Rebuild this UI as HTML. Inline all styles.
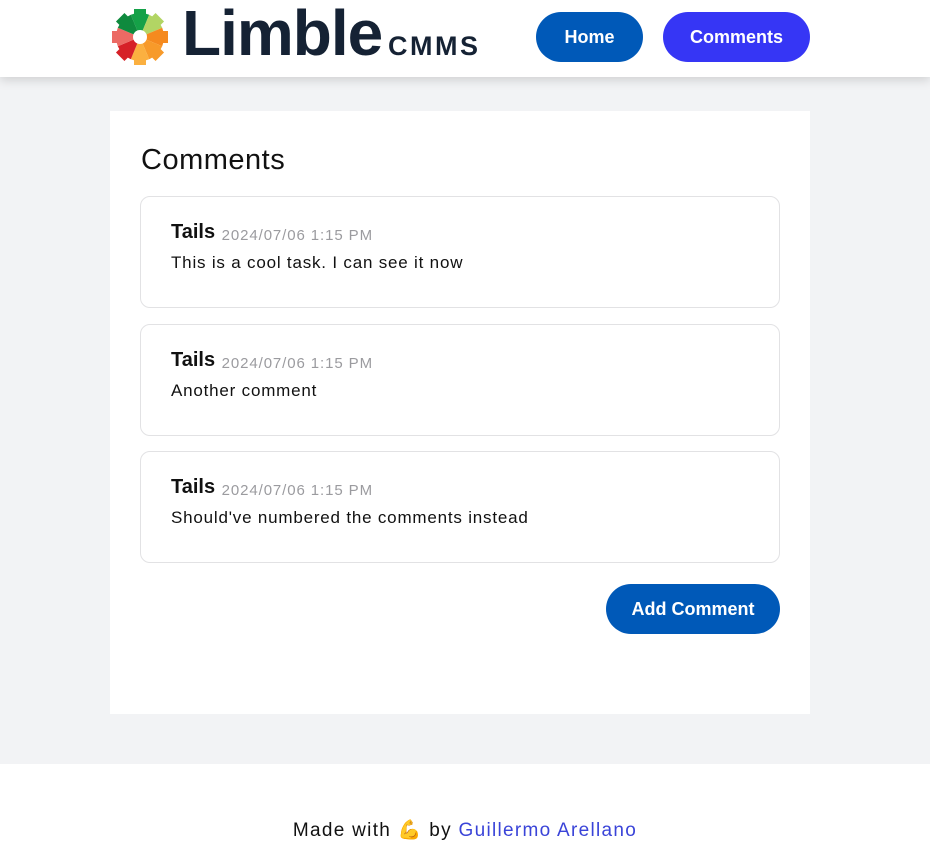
<!DOCTYPE html>
<html><head><meta charset="utf-8"><style>
*{box-sizing:border-box;margin:0;padding:0}
body{width:930px;height:863px;background:#f2f3f5;font-family:"Liberation Sans",Roboto,sans-serif;position:relative;overflow:hidden}
header{position:absolute;left:0;top:0;width:930px;height:77px;background:#fff;box-shadow:0 3px 10px rgba(0,0,0,.15)}
.logo{position:absolute;left:108px;top:5px}
.lt{position:absolute;left:182px;top:-4px;font-size:64px;font-weight:bold;color:#152234;letter-spacing:-1px}
.cm{position:absolute;left:388px;top:31px;font-size:27px;font-weight:bold;color:#152234;letter-spacing:2.5px}
.btn{position:absolute;color:#fff;font-weight:bold;font-size:18px;border-radius:25px;text-align:center;line-height:50px;height:50px}
.card{position:absolute;left:110px;top:111px;width:700px;height:603px;background:#fff}
h1{position:absolute;left:31px;top:33px;font-size:29px;font-weight:normal;color:#111;letter-spacing:0.5px}
.c{position:absolute;left:30px;width:640px;height:112px;border:1px solid #e2e2e4;border-radius:10px}
.n{position:absolute;left:30px;top:24px;font-size:20px;font-weight:bold;color:#111}
.n span{font-size:15px;font-weight:normal;color:#9b9b9f;margin-left:1px;letter-spacing:0.9px;position:relative;top:2px}
.t{position:absolute;left:30px;top:56px;font-size:17px;color:#111;letter-spacing:0.8px}
footer{position:absolute;left:0;top:764px;width:930px;height:99px;background:#fff;text-align:center;font-size:19px;color:#111;padding-top:54px;letter-spacing:1.3px}
footer a{color:#3a44d8;text-decoration:none}
</style></head><body>
<header>
<svg class="logo" width="64" height="64" viewBox="-32 -32 64 64">
<g><path d="M0 0 L-9.2 -22.2 L-6 -23.2 L-6 -28 L6 -28 L6 -23.2 L9.2 -22.2Z" fill="#15a148"/>
<path transform="rotate(45)" d="M0 0 L-9.2 -22.2 L-6 -23.2 L-6 -28 L6 -28 L6 -23.2 L9.2 -22.2Z" fill="#b2d564"/>
<path transform="rotate(90)" d="M0 0 L-9.2 -22.2 L-6 -23.2 L-6 -28 L6 -28 L6 -23.2 L9.2 -22.2Z" fill="#f58a1f"/>
<path transform="rotate(135)" d="M0 0 L-9.2 -22.2 L-6 -23.2 L-6 -28 L6 -28 L6 -23.2 L9.2 -22.2Z" fill="#f79a2a"/>
<path transform="rotate(180)" d="M0 0 L-9.2 -22.2 L-6 -23.2 L-6 -28 L6 -28 L6 -23.2 L9.2 -22.2Z" fill="#fbb040"/>
<path transform="rotate(225)" d="M0 0 L-9.2 -22.2 L-6 -23.2 L-6 -28 L6 -28 L6 -23.2 L9.2 -22.2Z" fill="#d62027"/>
<path transform="rotate(270)" d="M0 0 L-9.2 -22.2 L-6 -23.2 L-6 -28 L6 -28 L6 -23.2 L9.2 -22.2Z" fill="#ec6a64"/>
<path transform="rotate(315)" d="M0 0 L-9.2 -22.2 L-6 -23.2 L-6 -28 L6 -28 L6 -23.2 L9.2 -22.2Z" fill="#0f8a3e"/>
<circle r="7" fill="#fff"/></g></svg>
<div class="lt">Limble</div><div class="cm">CMMS</div>
<div class="btn" style="left:536px;top:12px;width:107px;background:#0059b8">Home</div>
<div class="btn" style="left:663px;top:12px;width:147px;background:#3636f5">Comments</div>
</header>
<div class="card">
<h1>Comments</h1>
<div class="c" style="top:85px"><div class="n">Tails <span>2024/07/06 1:15 PM</span></div><div class="t">This is a cool task. I can see it now</div></div>
<div class="c" style="top:213px"><div class="n">Tails <span>2024/07/06 1:15 PM</span></div><div class="t">Another comment</div></div>
<div class="c" style="top:340px"><div class="n">Tails <span>2024/07/06 1:15 PM</span></div><div class="t">Should've numbered the comments instead</div></div>
<div class="btn" style="left:496px;top:473px;width:174px;background:#0059b8">Add Comment</div>
</div>
<footer>Made with <span style="color:#f5b82e">💪</span> by <a>Guillermo Arellano</a></footer>
</body></html>
